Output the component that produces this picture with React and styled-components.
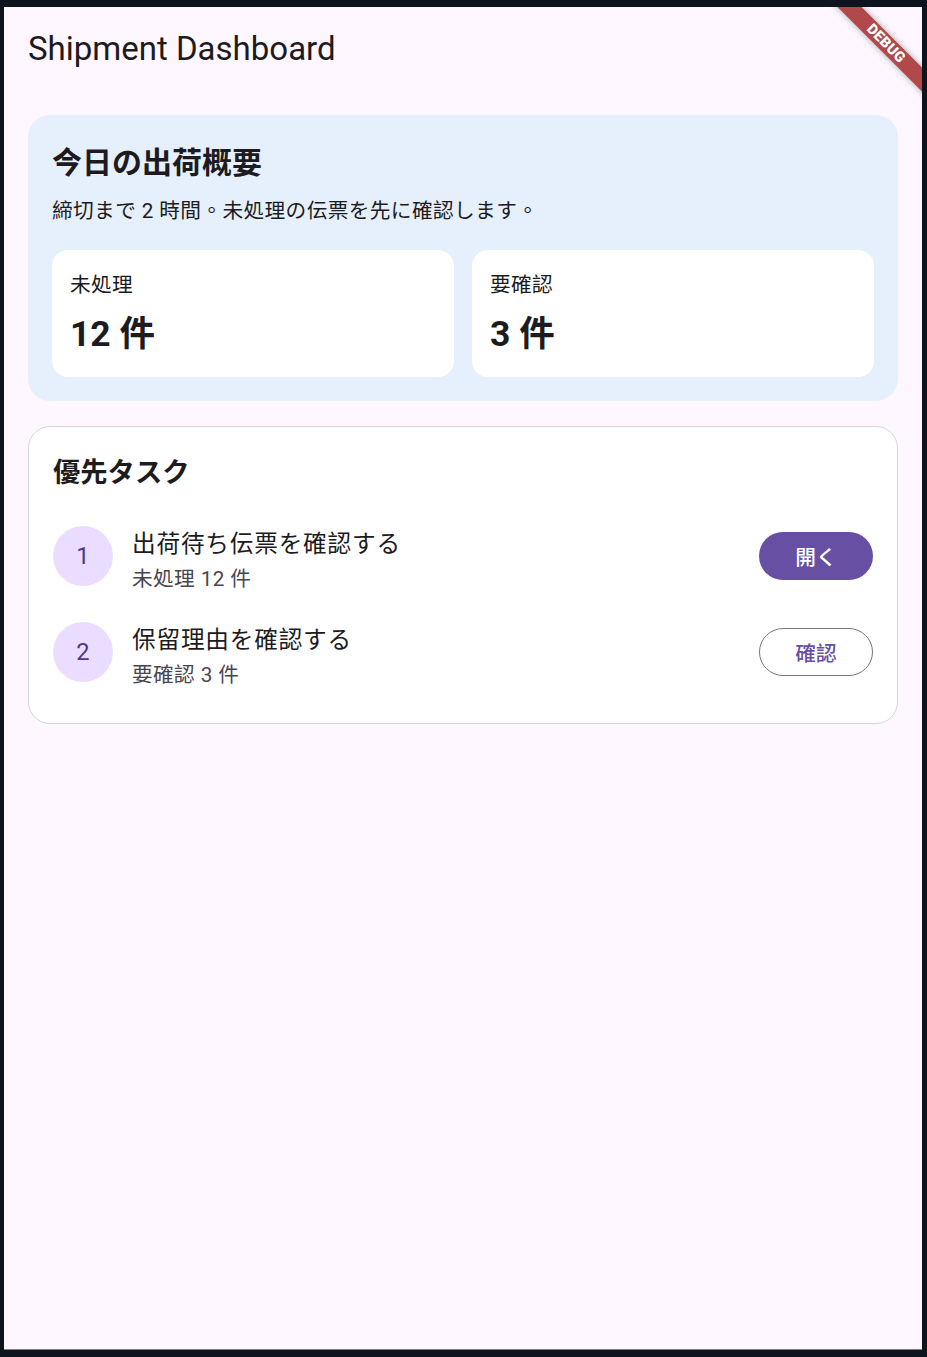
import React from "react";
import styled, { createGlobalStyle } from "styled-components";

const FONT = `Roboto, "Noto Sans CJK TC", "Noto Sans CJK JP", sans-serif`;

const GlobalStyle = createGlobalStyle`
  html, body { margin: 0; padding: 0; background: #0d141e; }
  body { font-family: ${FONT}; }
  * { box-sizing: border-box; }
`;

const Frame = styled.div`
  height: 1357px;
  padding: 7px 5px 7px 4px;
`;

const Screen = styled.div`
  position: relative;
  height: 100%;
  background: #fef7ff;
  border-bottom: 1px solid #837d88;
  overflow: hidden;
  display: flex;
  flex-direction: column;
`;

const AppBar = styled.header`
  height: 83px;
  display: flex;
  align-items: center;
  padding: 0 24px;
  flex-shrink: 0;
`;

const AppTitle = styled.h1`
  margin: 0;
  font-family: ${FONT};
  font-weight: 400;
  font-size: 33px;
  line-height: 40px;
  color: #1d1b20;
`;

const Body = styled.main`
  padding: 25px 24px;
  display: flex;
  flex-direction: column;
  gap: 25px;
`;

const SummaryCard = styled.section`
  background: #e6f0fd;
  border-radius: 22px;
  padding: 24px;
`;

const CardTitle = styled.h2`
  margin: 0;
  padding-top: 4px;
  font-size: 30px;
  font-weight: 700;
  line-height: 40px;
  color: #1d1b20;
`;

const SummaryText = styled.p`
  margin: 14px 0 0;
  font-size: 20.7px;
  letter-spacing: 0.37px;
  line-height: 28px;
  color: #1d1b20;
`;

const StatGrid = styled.div`
  margin-top: 25px;
  display: grid;
  grid-template-columns: 1fr 1fr;
  gap: 18px;
`;

const StatCard = styled.div`
  background: #ffffff;
  border-radius: 16px;
  height: 127px;
  padding: 21px 18px 18px;
  display: flex;
  flex-direction: column;
`;

const StatLabel = styled.div`
  font-size: 20.7px;
  letter-spacing: 0.37px;
  line-height: 28px;
  color: #1d1b20;
`;

const StatValue = styled.div`
  margin-top: 13px;
  font-size: 35.5px;
  font-weight: 700;
  line-height: 44px;
  color: #1d1b20;
`;

const TaskCard = styled.section`
  background: #ffffff;
  border: 1px solid #d3d6df;
  border-radius: 22px;
  padding: 24px 24px 23px;
`;

const SectionTitle = styled.h2`
  margin: 0 0 13px;
  font-size: 27.3px;
  font-weight: 700;
  line-height: 44px;
  color: #1d1b20;
`;

const TaskRow = styled.div`
  height: 96px;
  display: flex;
  align-items: center;
  gap: 20px;
`;

const NumberBadge = styled.div`
  width: 60px;
  height: 60px;
  border-radius: 50%;
  background: #eaddff;
  color: #4f378b;
  font-size: 23.7px;
  display: flex;
  align-items: center;
  justify-content: center;
  flex-shrink: 0;
`;

const TaskText = styled.div`
  flex: 1;
  display: flex;
  flex-direction: column;
  gap: 5px;
  padding-top: 8px;
  margin-left: -1px;
`;

const TaskTitle = styled.div`
  font-size: 23.7px;
  letter-spacing: 0.75px;
  line-height: 32px;
  color: #1d1b20;
`;

const TaskSub = styled.div`
  font-size: 20.7px;
  letter-spacing: 0.37px;
  line-height: 28px;
  color: #49454f;
`;

const ActionButton = styled.button`
  width: 114px;
  height: 48px;
  border-radius: 24px;
  font-family: ${FONT};
  font-size: 20.7px;
  font-weight: 500;
  letter-spacing: 0.15px;
  cursor: pointer;
  flex-shrink: 0;
  background: ${(p) => (p.$filled ? "#6750a4" : "transparent")};
  color: ${(p) => (p.$filled ? "#ffffff" : "#6750a4")};
  border: ${(p) => (p.$filled ? "none" : "1.5px solid #79747e")};
`;

const BannerClip = styled.div`
  position: absolute;
  top: 0;
  right: 0;
  width: 110px;
  height: 110px;
  overflow: hidden;
  pointer-events: none;
`;

const Ribbon = styled.div`
  position: absolute;
  width: 170px;
  height: 17px;
  left: ${110 - 36.25 - 85}px;
  top: ${36.25 - 8.5}px;
  transform: rotate(45deg);
  background: #b1484b;
  box-shadow: 0 0 6px rgba(0, 0, 0, 0.35);
  color: #ffffff;
  font-family: Roboto, sans-serif;
  font-weight: 900;
  font-size: 14.5px;
  line-height: 17px;
  text-align: center;
  letter-spacing: 0.3px;
`;

const tasks = [
  { n: 1, title: "出荷待ち伝票を確認する", sub: "未処理 12 件", action: "開く", filled: true },
  { n: 2, title: "保留理由を確認する", sub: "要確認 3 件", action: "確認", filled: false },
];

export default function App() {
  return (
    <>
      <GlobalStyle />
      <Frame>
        <Screen>
          <AppBar>
            <AppTitle>Shipment Dashboard</AppTitle>
          </AppBar>
          <Body>
            <SummaryCard>
              <CardTitle>今日の出荷概要</CardTitle>
              <SummaryText>締切まで 2 時間。未処理の伝票を先に確認します。</SummaryText>
              <StatGrid>
                <StatCard>
                  <StatLabel>未処理</StatLabel>
                  <StatValue>12 件</StatValue>
                </StatCard>
                <StatCard>
                  <StatLabel>要確認</StatLabel>
                  <StatValue>3 件</StatValue>
                </StatCard>
              </StatGrid>
            </SummaryCard>
            <TaskCard>
              <SectionTitle>優先タスク</SectionTitle>
              {tasks.map((t) => (
                <TaskRow key={t.n}>
                  <NumberBadge>{t.n}</NumberBadge>
                  <TaskText>
                    <TaskTitle>{t.title}</TaskTitle>
                    <TaskSub>{t.sub}</TaskSub>
                  </TaskText>
                  <ActionButton $filled={t.filled}>{t.action}</ActionButton>
                </TaskRow>
              ))}
            </TaskCard>
          </Body>
          <BannerClip>
            <Ribbon>DEBUG</Ribbon>
          </BannerClip>
        </Screen>
      </Frame>
    </>
  );
}
